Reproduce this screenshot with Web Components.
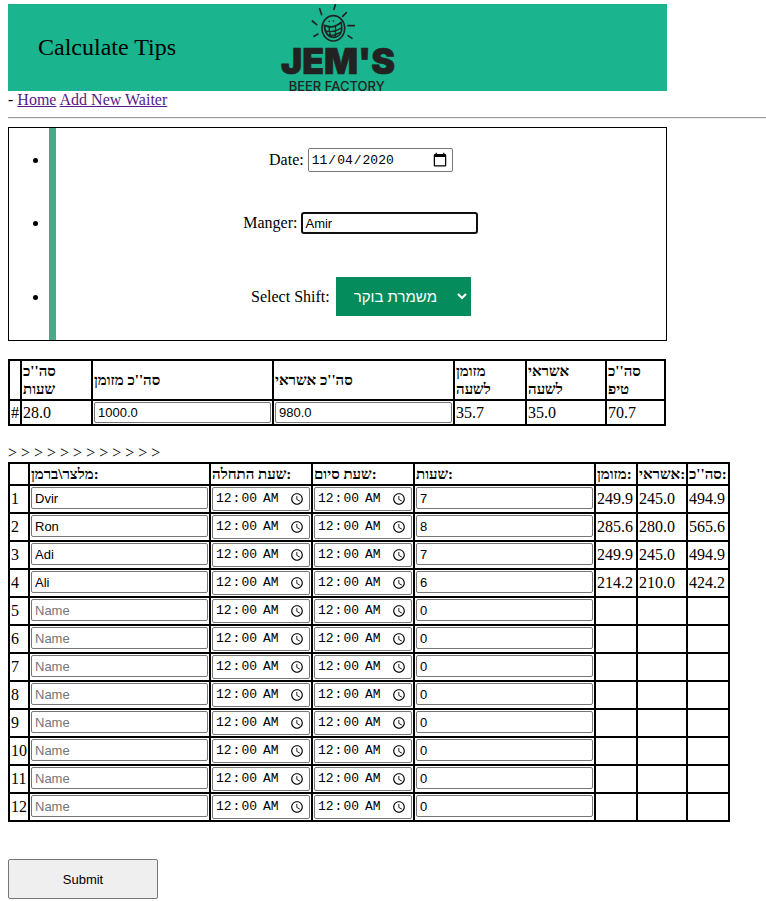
<!DOCTYPE html>
<html lang="en">
<head>
<meta charset="utf-8">
<title>Calculate Tips</title>
<style>
  :root { --content-width: 86vw; --serif: "Liberation Serif", "Times New Roman", serif; --sans: "Liberation Sans", Arial, sans-serif; --mono: "Liberation Mono", "Courier New", monospace; }
  body { margin: 4px 0 0 8px; background: #fff; color: #000; font: 16px/18px var(--serif); }
</style>
</head>
<body>
<tips-page>
  <tips-header>Calculate Tips</tips-header>
  <nav-links>
    <a href="#home">Home</a>
    <a href="#add-waiter">Add New Waiter</a>
  </nav-links>
  <shift-form></shift-form>
  <totals-table></totals-table>
  <waiters-table></waiters-table>
  <submit-button>Submit</submit-button>
</tips-page>

<script>
const define = (name, html) => customElements.define(name, class extends HTMLElement {
  constructor() {
    super();
    this.attachShadow({ mode: "open" }).innerHTML = html;
  }
});

const inputStyle = `
  input { box-sizing: border-box; margin: 0; border: 1px solid #767676; border-radius: 2px; background: #fff; color: #000; }
  input[type=text] { width: 100%; height: 21px; padding: 0 3px; font: 13px var(--sans); }
  input[type=date], input[type=time] { font: 13px var(--mono); height: 24px; padding: 1px 2px; }
  input::placeholder { color: #757575; }
`;

const tableStyle = `
  table { border-collapse: collapse; table-layout: fixed; }
  th, td { border: 2px solid #000; padding: 1px; text-align: left; }
  th { font-size: 15px; }
  td input { display: block; }
`;

define("tips-page", `
  <style>:host { display: flex; flex-direction: column; }</style>
  <slot></slot>
`);

define("tips-header", `
  <style>
    :host { display: grid; grid-template-columns: 1fr auto 1fr; align-items: center; width: var(--content-width); background: #1ab48e; }
    h1 { margin: 0; padding: 0 0 2px 30px; font-size: 24px; line-height: 28px; font-weight: normal; white-space: nowrap; }
    svg { display: block; width: 116px; height: 87px; overflow: visible; }
  </style>
  <h1><slot></slot></h1>
  <svg viewBox="30 12 348 261" role="img" aria-label="Jem's Beer Factory" fill="none" stroke="#222" stroke-linecap="round" stroke-linejoin="round">
    <g stroke-width="5">
      <path d="M152 26l6 18M199 14l-4 14M232 38l-11 11M237 77h19M237 107l12 8M147 102l-12 7M143 74l-13-11"/>
      <ellipse cx="193" cy="85" rx="34" ry="38"/>
      <path d="M166 76q27 12 50-9q9 40-20 45q-27 0-30-36z"/>
    </g>
    <path stroke-width="4" d="M180 64l1 0M193 63l1 0M168 92q26 8 49-8M176 105q20 4 36-7M181 79q-2 17 5 30M199 76q2 18 0 34"/>
    <g fill="#222" stroke="none" font-family="Inter, sans-serif">
      <text x="207" y="222" text-anchor="middle" font-size="107" font-weight="900" stroke="#222" stroke-width="2">JEM'S</text>
      <text x="203" y="274" text-anchor="middle" font-size="39" font-weight="500">BEER FACTORY</text>
    </g>
  </svg>
`);

define("nav-links", `
  <style>
    :host { display: block; }
    ::slotted(a) { color: #551a8b; text-decoration: underline; }
    hr { margin: 8px 0; border: solid; border-width: 1px 0; border-color: #9a9a9a #fff #eee #9a9a9a; }
  </style>
  <nav>- <slot></slot></nav>
  <hr>
`);

define("shift-form", `
  <style>
    ${inputStyle}
    :host { display: block; box-sizing: border-box; width: var(--content-width); margin-bottom: 18px; border: 1px solid #000; }
    ul { margin: 0; padding-left: 40px; }
    li { border-left: 7px solid #4ba888; padding: 20px 0; }
    div { display: flex; align-items: center; justify-content: center; gap: 4px; }
    input[type=date] { width: 145px; }
    input[type=date]::-webkit-calendar-picker-indicator { width: 16px; height: 16px; }
    input#manager { width: 177px; height: 22px; border: 2px solid #101010; border-radius: 3px; padding: 0 2px; outline: none; }
    li:last-child { padding: 23px 0 24px; }
    li:last-child div { gap: 6px; }
    select { width: 135px; height: 39px; padding: 0 18px; border: 0; border-radius: 0; background-color: #048c5c; color: #fff; font: 15px var(--sans);
      appearance: none; background-image: url('data:image/svg+xml,<svg xmlns="http://www.w3.org/2000/svg" width="10" height="7" fill="none" stroke="white" stroke-width="2"><path d="M1 1l4 4 4-4"/></svg>'); background-repeat: no-repeat; background-position: right 4px center; }
  </style>
  <ul>
    <li><div><label for="date">Date:</label><input id="date" type="date" value="2020-11-04"></div></li>
    <li><div><label for="manager">Manger:</label><input id="manager" type="text" value="Amir"></div></li>
    <li><div><label for="shift">Select Shift:</label><select id="shift"><option>משמרת בוקר</option></select></div></li>
  </ul>
`);

define("totals-table", `
  <style>
    ${inputStyle}
    ${tableStyle}
    :host { display: block; margin-bottom: 18px; }
    td { height: 21px; }
  </style>
  <table style="width:658px">
    <colgroup><col style="width:12px"><col style="width:71px"><col style="width:181px"><col style="width:181px"><col style="width:72px"><col style="width:80px"><col></colgroup>
    <thead><tr><th></th><th>סה''כ<br>שעות</th><th>סה''כ מזומן</th><th>סה''כ אשראי</th><th>מזומן<br>לשעה</th><th>אשראי<br>לשעה</th><th>סה''כ<br>טיפ</th></tr></thead>
    <tbody><tr><td>#</td><td>28.0</td>
      <td><input type="text" value="1000.0" aria-label="סה''כ מזומן"></td>
      <td><input type="text" value="980.0" aria-label="סה''כ אשראי"></td>
      <td>35.7</td><td>35.0</td><td>70.7</td></tr></tbody>
  </table>
`);

const waiters = [
  ["Dvir", 7, "249.9", "245.0", "494.9"],
  ["Ron", 8, "285.6", "280.0", "565.6"],
  ["Adi", 7, "249.9", "245.0", "494.9"],
  ["Ali", 6, "214.2", "210.0", "424.2"],
  ...Array.from({ length: 8 }, () => ["", 0, "", "", ""])
];

const waiterRow = ([name, hours, cash, credit, total], i) => `
  <tr><td>${i + 1}</td>
    <td class="field"><input type="text" placeholder="Name" value="${name}" aria-label="Name ${i + 1}"></td>
    <td><input type="time" value="00:00" aria-label="Start ${i + 1}"></td>
    <td><input type="time" value="00:00" aria-label="End ${i + 1}"></td>
    <td class="field"><input type="text" value="${hours}" aria-label="Hours ${i + 1}"></td>
    <td>${cash}</td><td>${credit}</td><td>${total}</td></tr>`;

define("waiters-table", `
  <style>
    ${inputStyle}
    ${tableStyle}
    :host { display: block; margin-bottom: 37px; }
    input[type=text] { height: 22px; padding: 1px 3px 0; }
    input[type=time] { width: 98px; }
    td { height: 24px; }
    td.field { vertical-align: top; }
    th { white-space: nowrap; }
  </style>
  <div>${"&gt; ".repeat(12)}</div>
  <table style="width:722px">
    <colgroup><col style="width:20px"><col style="width:181px"><col style="width:102px"><col style="width:102px"><col style="width:181px"><col style="width:42px"><col style="width:50px"><col></colgroup>
    <thead><tr><th></th><th>מלצר\\ברמן:</th><th>שעת התחלה:</th><th>שעת סיום:</th><th>שעות:</th><th>מזומן:</th><th>אשראי:</th><th>סה''כ:</th></tr></thead>
    <tbody>${waiters.map(waiterRow).join("")}</tbody>
  </table>
`);

define("submit-button", `
  <style>
    :host { display: block; }
    button { width: 150px; height: 40px; margin: 0; border: 1px solid #767676; border-radius: 2px; background: #efefef; color: #000; font: 13px var(--sans); }
  </style>
  <button type="submit"><slot></slot></button>
`);
</script>
</body>
</html>
